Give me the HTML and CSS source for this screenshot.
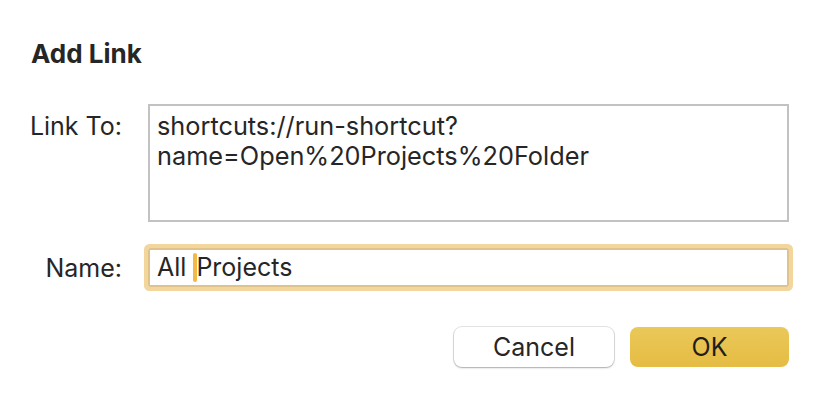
FILE: index.html
```html
<!DOCTYPE html>
<html lang="en">
<head>
    <meta charset="UTF-8">
    <title>Add Link</title>
    <link rel="stylesheet" href="styles.css">
</head>
<body>
    <div class="dialog">
        <h1 class="title">Add Link</h1>
        <div class="form">
            <label class="label label-top" for="link-to">Link To:</label>
            <div class="textarea" id="link-to">shortcuts://run-shortcut?<br>name=Open%20Projects%20Folder</div>
            <label class="label" for="name">Name:</label>
            <div class="input" id="name">All <span class="caret"></span>Projects</div>
        </div>
        <div class="buttons">
            <button class="btn">Cancel</button>
            <button class="btn btn-default">OK</button>
        </div>
    </div>
</body>
</html>
```

FILE: styles.css
```css
body {
    margin: 0;
    background: #fff;
    font-family: Inter, "Noto Sans", sans-serif;
    color: #262626;
}
.dialog {
    width: 822px;
    height: 396px;
    box-sizing: border-box;
    padding: 38px 33px 0 27px;
}
.title {
    margin: 0 0 0 4px;
    font-size: 26px;
    font-weight: 700;
    line-height: 32px;
}
.form {
    display: grid;
    grid-template-columns: 95px 1fr;
    column-gap: 26px;
    row-gap: 26px;
    margin-top: 34px;
    align-items: center;
}
.label {
    text-align: right;
    white-space: nowrap;
    font-size: 25px;
    line-height: 30px;
}
.label-top {
    align-self: start;
    padding-top: 7px;
}
.textarea {
    box-sizing: border-box;
    height: 118px;
    border: 2px solid #c2c2c2;
    padding: 5px 7px 0;
    font-size: 25.3px;
    line-height: 30px;
}
.input {
    box-sizing: border-box;
    height: 39px;
    border: 2px solid #dfc38c;
    box-shadow: 0 0 0 4px #f3d69b;
    border-radius: 2px;
    padding: 0 7px;
    font-size: 25px;
    line-height: 35px;
}
.caret {
    display: inline-block;
    width: 4px;
    height: 29px;
    margin-right: -1px;
    vertical-align: -6px;
    background: #f3b944;
    border-radius: 2px;
}
.buttons {
    display: flex;
    justify-content: flex-end;
    gap: 16px;
    margin-top: 40px;
}
.btn {
    width: 160px;
    height: 40px;
    border: none;
    border-radius: 8px;
    background: #fff;
    box-shadow: 0 0 0 1px rgba(0, 0, 0, 0.1), 0 1px 2px rgba(0, 0, 0, 0.25);
    font-family: Inter, "Noto Sans", sans-serif;
    font-size: 25px;
    color: #262626;
    padding: 0;
}
.btn-default {
    width: 159px;
    background: linear-gradient(#eac859, #e5bc44);
    box-shadow: none;
    color: #1e1e1e;
}
```
